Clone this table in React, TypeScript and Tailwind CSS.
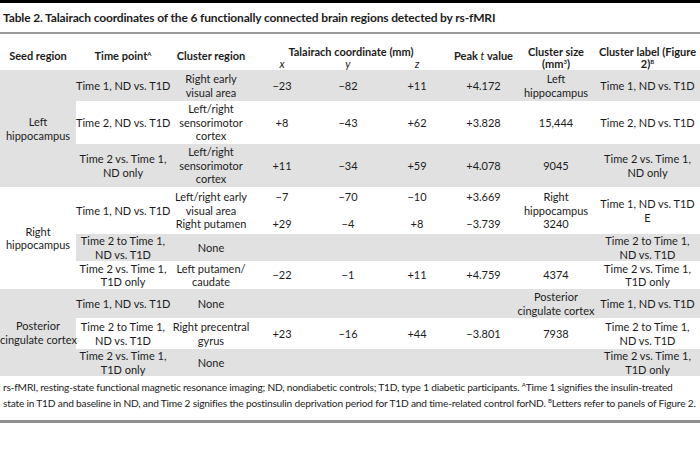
import React from "react";

const G = "bg-[#e1e1e1]";
const W = "bg-white";

type Row = {
  bg: string;
  h: string;
  seed?: { text: React.ReactNode; span: number; bg: string };
  cells: React.ReactNode[];
};

const L = (...lines: string[]) => (
  <>
    {lines.map((l, i) => (
      <React.Fragment key={i}>
        {i > 0 && <br />}
        {l === "" ? "\u00a0" : l}
      </React.Fragment>
    ))}
  </>
);

const Sup = ({ children }: { children: React.ReactNode }) => (
  <span className="relative -top-[4px] text-[6px] leading-none">{children}</span>
);

const rows: Row[] = [
  {
    bg: G,
    h: "h-[31px]",
    seed: { text: L("Left", "hippocampus"), span: 3, bg: G },
    cells: [L("Time 1, ND vs. T1D"), L("Right early", "visual area"), "\u221223", "\u221282", "+11", "+4.172", L("Left", "hippocampus"), L("Time 1, ND vs. T1D")],
  },
  {
    bg: W,
    h: "h-[43px]",
    cells: [L("Time 2, ND vs. T1D"), L("Left/right", "sensorimotor", "cortex"), "+8", "\u221243", "+62", "+3.828", "15,444", L("Time 2, ND vs. T1D")],
  },
  {
    bg: G,
    h: "h-[43px]",
    cells: [L("Time 2 vs. Time 1,", "ND only"), L("Left/right", "sensorimotor", "cortex"), "+11", "\u221234", "+59", "+4.078", "9045", L("Time 2 vs. Time 1,", "ND only")],
  },
  {
    bg: W,
    h: "h-[47px]",
    seed: { text: L("Right", "hippocampus"), span: 3, bg: W },
    cells: [
      L("Time 1, ND vs. T1D"),
      L("Left/right early", "visual area", "Right putamen"),
      L("\u22127", "", "+29"),
      L("\u221270", "", "\u22124"),
      L("\u221210", "", "+8"),
      L("+3.669", "", "\u22123.739"),
      L("Right", "hippocampus", "3240"),
      L("Time 1, ND vs. T1D", "E"),
    ],
  },
  {
    bg: G,
    h: "h-[27px]",
    cells: [L("Time 2 to Time 1,", "ND vs. T1D"), "None", "", "", "", "", "", L("Time 2 to Time 1,", "ND vs. T1D")],
  },
  {
    bg: W,
    h: "h-[28px]",
    cells: [L("Time 2 vs. Time 1,", "T1D only"), L("Left putamen/", "caudate"), "\u221222", "\u22121", "+11", "+4.759", "4374", L("Time 2 vs. Time 1,", "T1D only")],
  },
  {
    bg: G,
    h: "h-[29px]",
    seed: { text: L("Posterior", "cingulate cortex"), span: 3, bg: G },
    cells: [L("Time 1, ND vs. T1D"), "None", "", "", "", "", L("Posterior", "cingulate cortex"), L("Time 1, ND vs. T1D")],
  },
  {
    bg: W,
    h: "h-[31px]",
    cells: [L("Time 2 to Time 1,", "ND vs. T1D"), L("Right precentral", "gyrus"), "+23", "\u221216", "+44", "\u22123.801", "7938", L("Time 2 to Time 1,", "ND vs. T1D")],
  },
  {
    bg: G,
    h: "h-[27px]",
    cells: [L("Time 2 vs. Time 1,", "T1D only"), "None", "", "", "", "", "", L("Time 2 vs. Time 1,", "T1D only")],
  },
];

export default function App() {
  return (
    <div className="w-[700px] h-[473px] bg-white text-[#1c1c1c] font-['Lato',sans-serif]">
      <div className="h-[3px] bg-black" />
      <div className="h-[29px] pl-[3px] flex items-center text-[12px] tracking-[-0.15px] font-bold whitespace-nowrap">
        Table 2. Talairach coordinates of the 6 functionally connected brain regions detected by rs-fMRI
      </div>
      <div className="h-[2px] bg-[#9b9b9b]" />
      <table className="w-[700px] table-fixed border-collapse text-[11px] leading-[13.5px] text-center whitespace-nowrap">
        <colgroup>
          <col className="w-[76px]" />
          <col className="w-[94px]" />
          <col className="w-[82px]" />
          <col className="w-[60px]" />
          <col className="w-[72px]" />
          <col className="w-[66px]" />
          <col className="w-[67px]" />
          <col className="w-[78px]" />
          <col className="w-[105px]" />
        </colgroup>
        <thead className="font-bold text-[11px] leading-[11.5px]">
          <tr className="h-[24px]">
            <th rowSpan={2} className="p-0 pt-[8px] align-middle">Seed region</th>
            <th rowSpan={2} className="p-0 pt-[8px] align-middle">
              Time point<Sup>A</Sup>
            </th>
            <th rowSpan={2} className="p-0 pt-[8px] align-middle">Cluster region</th>
            <th colSpan={3} className="p-0 pb-[1px] align-bottom">Talairach coordinate (mm)</th>
            <th rowSpan={2} className="p-0 pt-[8px] align-middle">
              Peak <i className="font-normal">t</i> value
            </th>
            <th rowSpan={2} className="p-0 pb-[1px] align-bottom">
              Cluster size
              <br />
              (mm<Sup>3</Sup>)
            </th>
            <th rowSpan={2} className="p-0 pb-[1px] align-bottom">
              Cluster label (Figure
              <br />
              2)<Sup>B</Sup>
            </th>
          </tr>
          <tr className="h-[12px]">
            <th className="p-0 align-top font-normal italic">x</th>
            <th className="p-0 align-top font-normal italic">y</th>
            <th className="p-0 align-top font-normal italic">z</th>
          </tr>
        </thead>
        <tbody>
          {rows.map((r, i) => (
            <tr key={i} className={`${r.bg} ${r.h}`}>
              {r.seed && (
                <td rowSpan={r.seed.span} className={`${r.seed.bg} p-0 align-middle`}>
                  {r.seed.text}
                </td>
              )}
              {r.cells.map((c, j) => (
                <td key={j} className="p-0 align-middle">
                  {c}
                </td>
              ))}
            </tr>
          ))}
        </tbody>
      </table>
      <div className="pl-[3px] pt-[3px] pb-[9px] text-[10.2px] tracking-[-0.2px] leading-[16px] whitespace-nowrap">
        rs-fMRI, resting-state functional magnetic resonance imaging; ND, nondiabetic controls; T1D, type 1 diabetic participants. <Sup>A</Sup>Time 1 signifies the insulin-treated
        <br />
        state in T1D and baseline in ND, and Time 2 signifies the postinsulin deprivation period for T1D and time-related control forND. <Sup>B</Sup>Letters refer to panels of Figure 2.
      </div>
      <div className="h-[3px] bg-[#8e8e8e]" />
    </div>
  );
}
